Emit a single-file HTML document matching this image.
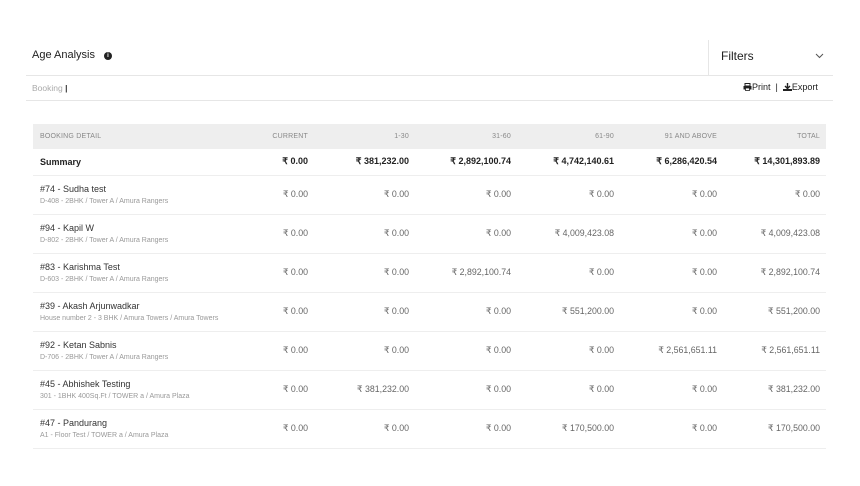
<!DOCTYPE html>
<html><head><meta charset="utf-8"><style>
*{margin:0;padding:0;box-sizing:border-box}
body{width:860px;height:486px;background:#fff;font-family:"Liberation Sans",sans-serif;position:relative;overflow:hidden;color:#222}
.abs{position:absolute}
.hl{position:absolute;height:1px;background:#e6e6e6}
table{position:absolute;left:33px;top:124px;width:793px;border-collapse:collapse;table-layout:fixed}
td,th{text-align:right;padding:0 6px 0 0;white-space:nowrap;overflow:visible}
th{height:25px;background:#eeeeee;font-weight:normal;font-size:7px;color:#888;letter-spacing:0.2px}
th:first-child,td:first-child{text-align:left;padding-left:7px}
tr.sum td{height:26px;font-weight:bold;font-size:9px;color:#222;border-bottom:1px solid #eee}
tr.r td{height:39px;font-size:8.8px;color:#666;border-bottom:1px solid #eee}
.n{font-size:9px;color:#333;display:block;margin-bottom:4px}
.s{font-size:7px;color:#999;display:block}
</style></head><body>
<div class="abs" style="left:32px;top:49px;font-size:11px;color:#222">Age Analysis</div>
<div class="abs" style="left:104px;top:52px;width:8px;height:8px;border-radius:50%;background:#222;color:#fff;font-size:6px;font-weight:bold;text-align:center;line-height:8px">i</div>
<div class="abs" style="left:708px;top:40px;width:1px;height:35px;background:#e6e6e6"></div>
<div class="abs" style="left:721px;top:49px;font-size:12px;color:#222">Filters</div>
<svg class="abs" style="left:815px;top:53px" width="9" height="6"><path d="M1 1 L4.5 4.5 L8 1" stroke="#555" fill="none" stroke-width="1"/></svg>
<div class="hl" style="left:26px;top:75px;width:807px"></div>
<div class="abs" style="left:32px;top:83px;font-size:8.5px;color:#aaa">Booking <span style="color:#333;font-weight:bold">|</span></div>
<div class="abs" style="left:743px;top:82px;font-size:9px;color:#222">
<svg width="9" height="8" style="vertical-align:-1px"><rect x="2" y="0.5" width="5" height="2.5" fill="none" stroke="#222"/><rect x="0.5" y="3" width="8" height="3.5" fill="#222"/><rect x="2.5" y="5" width="4" height="2.5" fill="#fff" stroke="#222" stroke-width="0.8"/></svg>Print &nbsp;|&nbsp; <svg width="9" height="8" style="vertical-align:-1px"><path d="M4.5 0 V5 M2 3 L4.5 5.5 L7 3" stroke="#222" stroke-width="1.4" fill="none"/><rect x="0" y="6" width="9" height="2" fill="#222"/></svg>Export</div>
<div class="hl" style="left:26px;top:100px;width:807px"></div>
<table>
<colgroup><col style="width:178px"><col style="width:103px"><col style="width:101px"><col style="width:102px"><col style="width:103px"><col style="width:103px"><col style="width:103px"></colgroup>
<tr><th>BOOKING DETAIL</th><th>CURRENT</th><th>1-30</th><th>31-60</th><th>61-90</th><th>91 AND ABOVE</th><th>TOTAL</th></tr>
<tr class="sum"><td>Summary</td><td>₹ 0.00</td><td>₹ 381,232.00</td><td>₹ 2,892,100.74</td><td>₹ 4,742,140.61</td><td>₹ 6,286,420.54</td><td>₹ 14,301,893.89</td></tr>
<tr class="r"><td><span class="n">#74 - Sudha test</span><span class="s">D-408 - 2BHK / Tower A / Amura Rangers</span></td><td>₹ 0.00</td><td>₹ 0.00</td><td>₹ 0.00</td><td>₹ 0.00</td><td>₹ 0.00</td><td>₹ 0.00</td></tr>
<tr class="r"><td><span class="n">#94 - Kapil W</span><span class="s">D-802 - 2BHK / Tower A / Amura Rangers</span></td><td>₹ 0.00</td><td>₹ 0.00</td><td>₹ 0.00</td><td>₹ 4,009,423.08</td><td>₹ 0.00</td><td>₹ 4,009,423.08</td></tr>
<tr class="r"><td><span class="n">#83 - Karishma Test</span><span class="s">D-603 - 2BHK / Tower A / Amura Rangers</span></td><td>₹ 0.00</td><td>₹ 0.00</td><td>₹ 2,892,100.74</td><td>₹ 0.00</td><td>₹ 0.00</td><td>₹ 2,892,100.74</td></tr>
<tr class="r"><td><span class="n">#39 - Akash Arjunwadkar</span><span class="s">House number 2 - 3 BHK / Amura Towers / Amura Towers</span></td><td>₹ 0.00</td><td>₹ 0.00</td><td>₹ 0.00</td><td>₹ 551,200.00</td><td>₹ 0.00</td><td>₹ 551,200.00</td></tr>
<tr class="r"><td><span class="n">#92 - Ketan Sabnis</span><span class="s">D-706 - 2BHK / Tower A / Amura Rangers</span></td><td>₹ 0.00</td><td>₹ 0.00</td><td>₹ 0.00</td><td>₹ 0.00</td><td>₹ 2,561,651.11</td><td>₹ 2,561,651.11</td></tr>
<tr class="r"><td><span class="n">#45 - Abhishek Testing</span><span class="s">301 - 1BHK 400Sq.Ft / TOWER a / Amura Plaza</span></td><td>₹ 0.00</td><td>₹ 381,232.00</td><td>₹ 0.00</td><td>₹ 0.00</td><td>₹ 0.00</td><td>₹ 381,232.00</td></tr>
<tr class="r"><td><span class="n">#47 - Pandurang</span><span class="s">A1 - Floor Test / TOWER a / Amura Plaza</span></td><td>₹ 0.00</td><td>₹ 0.00</td><td>₹ 0.00</td><td>₹ 170,500.00</td><td>₹ 0.00</td><td>₹ 170,500.00</td></tr>
</table>
</body></html>
